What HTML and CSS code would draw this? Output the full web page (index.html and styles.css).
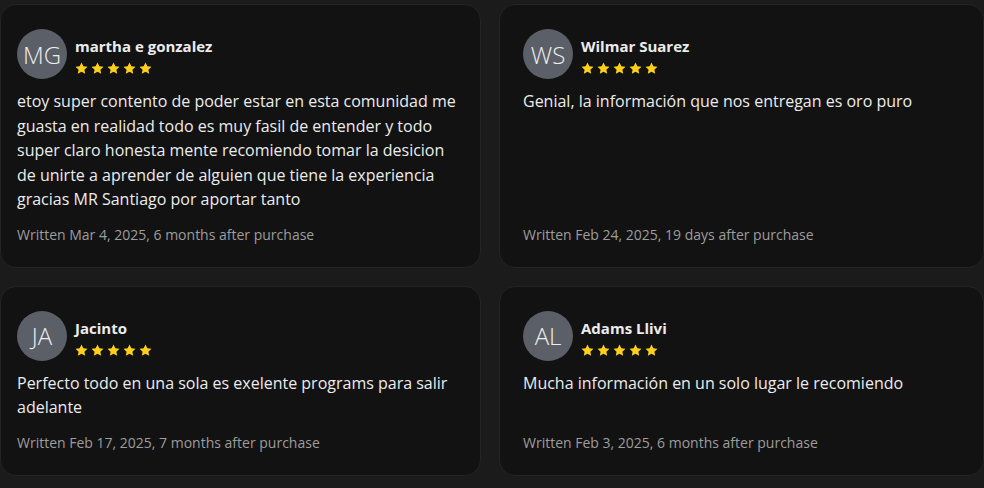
FILE: index.html
```html
<!DOCTYPE html>
<html lang="es">
  <head>
    <meta charset="UTF-8" />
    <meta name="viewport" content="width=device-width, initial-scale=1.0" />
    <title>Reviews</title>
    <link rel="stylesheet" href="styles.css">
  </head>
  <body>
    <svg width="0" height="0" class="defs">
      <defs>
        <path id="star" d="M12 .8l3.4 7 7.6 1-5.6 5.3 1.4 7.6L12 18l-6.8 3.7 1.4-7.6L1 8.8l7.6-1z" />
      </defs>
    </svg>

    <div class="reviews">
      <!-- row 1 -->
      <div class="card">
        <div class="head">
          <div class="avatar">MG</div>
          <div class="who">
            <div class="name">martha e gonzalez</div>
            <div class="stars">
              <svg viewBox="0 0 24 24"><use href="#star" /></svg>
              <svg viewBox="0 0 24 24"><use href="#star" /></svg>
              <svg viewBox="0 0 24 24"><use href="#star" /></svg>
              <svg viewBox="0 0 24 24"><use href="#star" /></svg>
              <svg viewBox="0 0 24 24"><use href="#star" /></svg>
            </div>
          </div>
        </div>
        <p class="text">etoy super contento de poder estar en esta comunidad me guasta en realidad todo es muy fasil de entender y todo super claro honesta mente recomiendo tomar la desicion de unirte a aprender de alguien que tiene la experiencia gracias MR Santiago por aportar tanto</p>
        <div class="meta">Written Mar 4, 2025, 6 months after purchase</div>
      </div>

      <div class="card">
        <div class="head">
          <div class="avatar">WS</div>
          <div class="who">
            <div class="name">Wilmar Suarez</div>
            <div class="stars">
              <svg viewBox="0 0 24 24"><use href="#star" /></svg>
              <svg viewBox="0 0 24 24"><use href="#star" /></svg>
              <svg viewBox="0 0 24 24"><use href="#star" /></svg>
              <svg viewBox="0 0 24 24"><use href="#star" /></svg>
              <svg viewBox="0 0 24 24"><use href="#star" /></svg>
            </div>
          </div>
        </div>
        <p class="text">Genial, la información que nos entregan es oro puro</p>
        <div class="meta">Written Feb 24, 2025, 19 days after purchase</div>
      </div>

      <!-- row 2 -->
      <div class="card">
        <div class="head">
          <div class="avatar">JA</div>
          <div class="who">
            <div class="name">Jacinto</div>
            <div class="stars">
              <svg viewBox="0 0 24 24"><use href="#star" /></svg>
              <svg viewBox="0 0 24 24"><use href="#star" /></svg>
              <svg viewBox="0 0 24 24"><use href="#star" /></svg>
              <svg viewBox="0 0 24 24"><use href="#star" /></svg>
              <svg viewBox="0 0 24 24"><use href="#star" /></svg>
            </div>
          </div>
        </div>
        <p class="text">Perfecto todo en una sola es exelente programs para salir adelante</p>
        <div class="meta">Written Feb 17, 2025, 7 months after purchase</div>
      </div>

      <div class="card">
        <div class="head">
          <div class="avatar">AL</div>
          <div class="who">
            <div class="name">Adams Llivi</div>
            <div class="stars">
              <svg viewBox="0 0 24 24"><use href="#star" /></svg>
              <svg viewBox="0 0 24 24"><use href="#star" /></svg>
              <svg viewBox="0 0 24 24"><use href="#star" /></svg>
              <svg viewBox="0 0 24 24"><use href="#star" /></svg>
              <svg viewBox="0 0 24 24"><use href="#star" /></svg>
            </div>
          </div>
        </div>
        <p class="text">Mucha información en un solo lugar le recomiendo</p>
        <div class="meta">Written Feb 3, 2025, 6 months after purchase</div>
      </div>
    </div>
  </body>
</html>
```

FILE: styles.css
```css
:root {
  --page-bg: #1b1b1b;
  --card-bg: #121212;
  --card-border: #242424;
  --text: #ececec;
  --muted: #9d9d9d;
  --star: #fcd01c;
  --avatar: #5b5f67;
}

* {
  box-sizing: border-box;
}

body {
  margin: 0;
  background: var(--page-bg);
  font-family: "Open Sans", "Noto Sans", sans-serif;
  color: var(--text);
}

.defs {
  position: absolute;
}

.reviews {
  display: grid;
  grid-template-columns: 481px 1fr;
  gap: 18px;
  padding-top: 4px;
}

.card {
  display: flex;
  flex-direction: column;
  background: var(--card-bg);
  border: 1px solid var(--card-border);
  border-radius: 16px;
  padding: 24px 16px 22px;
}

.card:nth-child(even) {
  padding-left: 23px;
}

.head {
  display: flex;
  align-items: flex-start;
  gap: 8px;
}

.avatar {
  width: 50px;
  height: 50px;
  border-radius: 50%;
  background: var(--avatar);
  color: #eeeeee;
  display: flex;
  align-items: center;
  justify-content: center;
  font-size: 24px;
  font-weight: 300;
  flex-shrink: 0;
}

.who {
  margin-top: 7px;
}

.name {
  font-size: 15px;
  font-weight: 700;
  line-height: 20px;
}

.stars {
  display: flex;
  gap: 3px;
  margin-top: 6px;
}

.stars svg {
  width: 13px;
  height: 13px;
  fill: var(--star);
}

.text {
  margin: 10px 0 0;
  font-size: 16px;
  line-height: 24.5px;
}

.meta {
  margin-top: auto;
  padding-top: 13px;
  font-size: 14px;
  line-height: 20px;
  color: var(--muted);
}
```
